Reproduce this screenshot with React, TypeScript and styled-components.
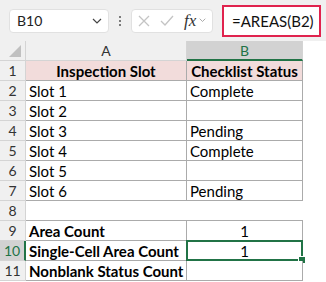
import React from "react";
import styled, { createGlobalStyle } from "styled-components";

const GlobalStyle = createGlobalStyle`
  html, body {
    margin: 0;
    padding: 0;
    background: #ffffff;
  }
  body {
    font-family: Lato, "Liberation Sans", sans-serif;
  }
`;

const green = "#217346";
const gridLine = "#ababab";
const headLine = "#d4d4d4";

const Page = styled.div`
  width: 326px;
  height: 282px;
  overflow: hidden;
  background: #fff;
`;

const Toolbar = styled.div`
  height: 41px;
  background: #f0f0f0;
  display: flex;
  align-items: center;
  box-sizing: border-box;
  padding-left: 9px;
`;

const NameBox = styled.div`
  width: 100px;
  height: 24px;
  box-sizing: border-box;
  background: #fff;
  border: 1px solid #e1e1e1;
  border-radius: 4px;
  display: flex;
  align-items: center;
  justify-content: space-between;
  padding: 0 6px 0 7px;
  font-size: 14px;
  color: #222;
`;

const Dots = styled.div`
  width: 22px;
  display: flex;
  flex-direction: column;
  align-items: center;
  gap: 2px;
  span {
    width: 2px;
    height: 2px;
    background: #555;
    border-radius: 1px;
  }
`;

const FxBox = styled.div`
  width: 82px;
  height: 24px;
  box-sizing: border-box;
  background: #fff;
  border: 1px solid #e1e1e1;
  border-radius: 4px;
  display: flex;
  align-items: center;
  padding-left: 6px;
  gap: 10px;
`;

const FxLabel = styled.span`
  font-family: "Liberation Serif", serif;
  font-style: italic;
  font-size: 17px;
  color: #333;
  display: flex;
  align-items: center;
  gap: 3px;
`;

const FormulaInput = styled.div`
  margin-left: 9px;
  width: 99px;
  height: 32px;
  box-sizing: border-box;
  border: 2px solid #e0234e;
  background: #fff;
  display: flex;
  align-items: center;
  padding-left: 8px;
  font-size: 15px;
  color: #111;
`;

const Grid = styled.div`
  display: grid;
  grid-template-columns: 26px 161px 116px 23px;
  grid-auto-rows: 20px;
`;

const ColHead = styled.div<{ $active?: boolean; $blank?: boolean }>`
  background: ${(p) => (p.$active ? "#d2d2d2" : p.$blank ? "#fff" : "#f0f0f0")};
  border-right: ${(p) => (p.$blank ? "none" : `1px solid ${headLine}`)};
  border-bottom: ${(p) =>
    p.$active ? `2px solid ${green}` : p.$blank ? "none" : `1px solid ${headLine}`};
  color: ${(p) => (p.$active ? green : "#333")};
  font-size: 14px;
  display: flex;
  align-items: center;
  justify-content: center;
  box-sizing: border-box;
`;

const Corner = styled.div`
  background: #f0f0f0;
  border-right: 1px solid ${headLine};
  border-bottom: 1px solid ${headLine};
  position: relative;
  box-sizing: border-box;
  &::after {
    content: "";
    position: absolute;
    right: 4px;
    bottom: 3px;
    width: 0;
    height: 0;
    border-left: 12px solid transparent;
    border-bottom: 12px solid #c0c0c0;
  }
`;

const RowHead = styled.div<{ $active?: boolean }>`
  background: ${(p) => (p.$active ? "#d2d2d2" : "#f0f0f0")};
  border-right: ${(p) => (p.$active ? `2px solid ${green}` : `1px solid ${headLine}`)};
  border-bottom: 1px solid ${headLine};
  color: ${(p) => (p.$active ? green : "#333")};
  font-size: 14px;
  display: flex;
  align-items: center;
  justify-content: center;
  box-sizing: border-box;
`;

const Cell = styled.div<{
  $bold?: boolean;
  $head?: boolean;
  $center?: boolean;
  $lined?: boolean;
  $under?: boolean;
  $selected?: boolean;
}>`
  position: relative;
  box-sizing: border-box;
  background: ${(p) => (p.$head ? "#f2dcdb" : "#fff")};
  border-right: ${(p) => (p.$lined ? `1px solid ${gridLine}` : "none")};
  border-bottom: ${(p) => (p.$lined || p.$under ? `1px solid ${gridLine}` : "none")};
  font-size: 15px;
  font-weight: ${(p) => (p.$bold || p.$head ? 700 : 400)};
  color: #000;
  display: flex;
  align-items: center;
  justify-content: ${(p) => (p.$head || p.$center ? "center" : "flex-start")};
  padding-left: ${(p) => (p.$head || p.$center ? "0" : "3px")};
  white-space: nowrap;
  ${(p) =>
    p.$selected &&
    `
    &::before {
      content: "";
      position: absolute;
      left: -1px;
      top: -1px;
      right: -1px;
      bottom: -1px;
      border: 2px solid ${green};
    }
    &::after {
      content: "";
      position: absolute;
      right: -4px;
      bottom: -4px;
      width: 6px;
      height: 6px;
      background: ${green};
      border: 1px solid #fff;
    }
  `}
`;

const Blank = styled.div``;

type Row = {
  n: number;
  a: string;
  b: string;
  kind: "head" | "data" | "gap" | "sum";
};

const rows: Row[] = [
  { n: 1, a: "Inspection Slot", b: "Checklist Status", kind: "head" },
  { n: 2, a: "Slot 1", b: "Complete", kind: "data" },
  { n: 3, a: "Slot 2", b: "", kind: "data" },
  { n: 4, a: "Slot 3", b: "Pending", kind: "data" },
  { n: 5, a: "Slot 4", b: "Complete", kind: "data" },
  { n: 6, a: "Slot 5", b: "", kind: "data" },
  { n: 7, a: "Slot 6", b: "Pending", kind: "data" },
  { n: 8, a: "", b: "", kind: "gap" },
  { n: 9, a: "Area Count", b: "1", kind: "sum" },
  { n: 10, a: "Single-Cell Area Count", b: "1", kind: "sum" },
  { n: 11, a: "Nonblank Status Count", b: "", kind: "sum" },
];

const Chevron = ({ size = 10, color = "#444" }: { size?: number; color?: string }) => (
  <svg width={size} height={size * 0.6} viewBox="0 0 10 6">
    <path d="M1 1 L5 5 L9 1" fill="none" stroke={color} strokeWidth="1.2" />
  </svg>
);

export default function App() {
  return (
    <Page>
      <GlobalStyle />
      <Toolbar>
        <NameBox>
          <span>B10</span>
          <Chevron />
        </NameBox>
        <Dots>
          <span />
          <span />
          <span />
        </Dots>
        <FxBox>
          <svg width="12" height="12" viewBox="0 0 12 12">
            <path d="M1 1 L11 11 M11 1 L1 11" stroke="#c4c4c4" strokeWidth="1.3" />
          </svg>
          <svg width="14" height="11" viewBox="0 0 14 11">
            <path d="M1 6 L5 10 L13 1" fill="none" stroke="#c4c4c4" strokeWidth="1.3" />
          </svg>
          <FxLabel>
            fx
            <Chevron size={7} color="#999" />
          </FxLabel>
        </FxBox>
        <FormulaInput>=AREAS(B2)</FormulaInput>
      </Toolbar>
      <Grid>
        <Corner />
        <ColHead>A</ColHead>
        <ColHead $active>B</ColHead>
        <ColHead $blank />
        {rows.map((r) => (
          <React.Fragment key={r.n}>
            <RowHead $active={r.n === 10}>{r.n}</RowHead>
            <Cell
              $head={r.kind === "head"}
              $bold={r.kind === "sum"}
              $lined={r.kind !== "gap"}
              $under={r.kind === "gap"}
            >
              {r.a}
            </Cell>
            <Cell
              $head={r.kind === "head"}
              $center={r.kind === "sum"}
              $lined={r.kind !== "gap"}
              $under={r.kind === "gap"}
              $selected={r.n === 10}
            >
              {r.b}
            </Cell>
            <Blank />
          </React.Fragment>
        ))}
      </Grid>
    </Page>
  );
}
